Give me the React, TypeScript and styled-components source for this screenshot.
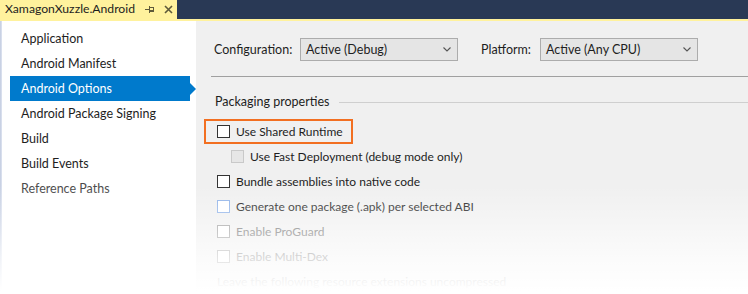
import React from "react";
import styled, { createGlobalStyle } from "styled-components";

const Global = createGlobalStyle`
  html, body { margin: 0; padding: 0; background: #ffffff; }
  body { font-family: Lato, "Noto Sans", sans-serif; font-size: 12px; color: #1e1e1e; }
  * { box-sizing: border-box; }
`;

const Root = styled.div`
  position: relative;
  width: 748px;
  height: 294px;
  overflow: hidden;
  display: flex;
  flex-direction: column;
  background: #ffffff;
`;

const TabStrip = styled.div`
  height: 19px;
  background: #293955;
  display: flex;
  flex-shrink: 0;
`;

const Tab = styled.div`
  width: 177px;
  height: 19px;
  background: #fff29d;
  display: flex;
  align-items: center;
  padding-left: 5px;
  color: #1e1e1e;
  line-height: 1;
  font-size: 12.2px;
`;

const TabTitle = styled.span`
  flex: 1;
  white-space: nowrap;
`;

const TabIcon = styled.span`
  display: flex;
  align-items: center;
  justify-content: center;
  width: 18px;
  height: 19px;
  color: #5e5a3a;
`;

const TabUnderline = styled.div`
  height: 2px;
  background: #fff29d;
  flex-shrink: 0;
`;

const Body = styled.div`
  flex: 1;
  display: flex;
  min-height: 0;
`;

const LeftEdge = styled.div`
  width: 2px;
  background: linear-gradient(to right, #c2cbe0, #dfe5f1);
  flex-shrink: 0;
`;

const Sidebar = styled.nav`
  width: 194px;
  flex-shrink: 0;
  background: #ffffff;
  padding-top: 5px;
  display: flex;
  flex-direction: column;
  font-size: 12.5px;
`;

const NavItem = styled.div<{ $selected?: boolean; $muted?: boolean }>`
  position: relative;
  height: 25px;
  margin-left: 8px;
  width: 180px;
  padding-left: 11px;
  display: flex;
  align-items: center;
  white-space: nowrap;
  background: ${(p) => (p.$selected ? "#007acc" : "transparent")};
  color: ${(p) => (p.$selected ? "#ffffff" : p.$muted ? "#4a4a4a" : "#1e1e1e")};
`;

const NavArrow = styled.span`
  position: absolute;
  right: -6px;
  top: 50%;
  margin-top: -6px;
  width: 0;
  height: 0;
  border-top: 6px solid transparent;
  border-bottom: 6px solid transparent;
  border-left: 6px solid #007acc;
`;

const Content = styled.main`
  flex: 1;
  background: #f0f0f0;
  display: flex;
  flex-direction: column;
  min-width: 0;
`;

const Toolbar = styled.div`
  display: flex;
  align-items: center;
  padding: 17px 0 0 18px;
  height: 40px;
  font-size: 12.5px;
`;

const FieldLabel = styled.label<{ $width: number }>`
  width: ${(p) => p.$width}px;
  flex-shrink: 0;
  white-space: nowrap;
`;

const Select = styled.div`
  width: 158px;
  height: 23px;
  background: #e5e5e5;
  border: 1px solid #acacac;
  display: flex;
  align-items: center;
  padding: 0 4px 0 5px;
  margin-right: 23px;
  white-space: nowrap;
`;

const SelectValue = styled.span`
  flex: 1;
`;

const Chevron = styled.svg`
  width: 8px;
  height: 5px;
  margin-right: 2px;
`;

const Divider = styled.div`
  height: 1px;
  background: #a0a0a0;
  margin: 15px 0 0 15px;
`;

const GroupHeader = styled.div`
  height: 25px;
  margin: 12px 0 5px 0;
  padding-left: 19px;
  display: flex;
  align-items: center;
  gap: 10px;
  white-space: nowrap;
  font-size: 12.5px;
`;

const GroupRule = styled.span`
  flex: 1;
  height: 1px;
  background: #cfcfcf;
  margin-top: 1px;
`;

const CheckRow = styled.div<{ $indent?: number; $tone?: string }>`
  height: 25px;
  display: flex;
  align-items: center;
  padding-left: ${(p) => 21 + (p.$indent ?? 0)}px;
  gap: 6px;
  white-space: nowrap;
  color: ${(p) => p.$tone ?? "#1e1e1e"};
`;

const Highlight = styled.div`
  height: 25px;
  align-self: flex-start;
  margin-left: 8px;
  display: flex;
  align-items: center;
  gap: 6px;
  padding: 0 8px 0 11px;
  border: 2px solid #f26f21;
  white-space: nowrap;
`;

const Box = styled.span<{ $border?: string; $fill?: string }>`
  width: 13px;
  height: 13px;
  flex-shrink: 0;
  border: 1px solid ${(p) => p.$border ?? "#333333"};
  background: ${(p) => p.$fill ?? "#ffffff"};
`;

const Fade = styled.div`
  position: absolute;
  left: 0;
  right: 0;
  top: 185px;
  bottom: 0;
  pointer-events: none;
  background: linear-gradient(to bottom, rgba(255,255,255,0) 0%, rgba(255,255,255,0.3) 30%, rgba(255,255,255,0.72) 66%, #ffffff 97%);
`;

const navItems = [
  { label: "Application" },
  { label: "Android Manifest" },
  { label: "Android Options", selected: true },
  { label: "Android Package Signing" },
  { label: "Build" },
  { label: "Build Events" },
  { label: "Reference Paths", muted: true },
];

const ChevronIcon = () => (
  <Chevron viewBox="0 0 8 5">
    <path d="M0.5 0.5 L4 4 L7.5 0.5" fill="none" stroke="#555" strokeWidth="1.1" />
  </Chevron>
);

export default function App() {
  return (
    <>
      <Global />
      <Root>
        <TabStrip>
          <Tab>
            <TabTitle>XamagonXuzzle.Android</TabTitle>
            <TabIcon>
              <svg width="10" height="9" viewBox="0 0 10 9">
                <path d="M0 4.5 H4" stroke="currentColor" strokeWidth="1" />
                <path d="M4.5 1 V8" stroke="currentColor" strokeWidth="1" />
                <rect x="4.5" y="2.5" width="4" height="4" fill="none" stroke="currentColor" strokeWidth="1" />
                <path d="M4.5 5.5 H8.5" stroke="currentColor" strokeWidth="1" />
              </svg>
            </TabIcon>
            <TabIcon>
              <svg width="9" height="9" viewBox="0 0 9 9">
                <path d="M1 1 L8 8 M8 1 L1 8" stroke="currentColor" strokeWidth="1.6" />
              </svg>
            </TabIcon>
          </Tab>
        </TabStrip>
        <TabUnderline />
        <Body>
          <LeftEdge />
          <Sidebar>
            {navItems.map((it) => (
              <NavItem key={it.label} $selected={it.selected} $muted={it.muted}>
                {it.label}
                {it.selected && <NavArrow />}
              </NavItem>
            ))}
          </Sidebar>
          <Content>
            <Toolbar>
              <FieldLabel $width={86}>Configuration:</FieldLabel>
              <Select>
                <SelectValue>Active (Debug)</SelectValue>
                <ChevronIcon />
              </Select>
              <FieldLabel $width={59}>Platform:</FieldLabel>
              <Select>
                <SelectValue>Active (Any CPU)</SelectValue>
                <ChevronIcon />
              </Select>
            </Toolbar>
            <Divider />
            <GroupHeader>
              Packaging properties
              <GroupRule />
            </GroupHeader>
            <Highlight>
              <Box />
              Use Shared Runtime
            </Highlight>
            <CheckRow $indent={14}>
              <Box $border="#c9c9c9" $fill="#e6e6e6" />
              Use Fast Deployment (debug mode only)
            </CheckRow>
            <CheckRow>
              <Box />
              Bundle assemblies into native code
            </CheckRow>
            <CheckRow>
              <Box $border="#8fb2e8" />
              Generate one package (.apk) per selected ABI
            </CheckRow>
            <CheckRow $tone="#6d6d6d">
              <Box $border="#9a9a9a" />
              Enable ProGuard
            </CheckRow>
            <CheckRow $tone="#6d6d6d">
              <Box $border="#9a9a9a" />
              Enable Multi-Dex
            </CheckRow>
            <CheckRow $tone="#6d6d6d">Leave the following resource extensions uncompressed</CheckRow>
          </Content>
        </Body>
        <Fade />
      </Root>
    </>
  );
}
